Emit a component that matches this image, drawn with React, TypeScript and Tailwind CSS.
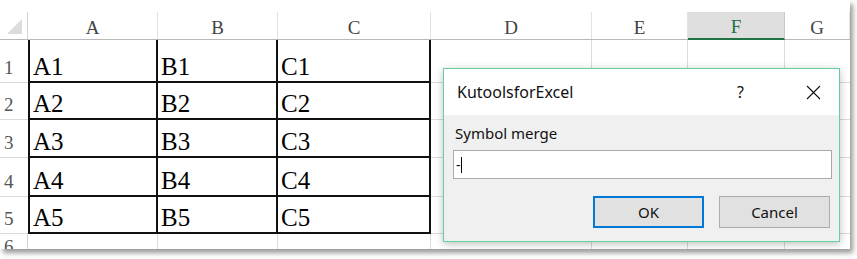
import React from "react";

const serif = "font-['Liberation_Serif',serif]";
const ui = "font-['Noto_Sans',sans-serif]";

const headerCols = [
  { label: "A", cls: "w-[130px]" },
  { label: "B", cls: "w-[120px]" },
  { label: "C", cls: "w-[153px]" },
  { label: "D", cls: "w-[161px]" },
  { label: "E", cls: "w-[96px]" },
  { label: "F", cls: "w-[97px]", active: true },
  { label: "G", cls: "flex-1" },
];

const rows = [
  { n: 1, h: "h-[43px]" },
  { n: 2, h: "h-[37px]" },
  { n: 3, h: "h-[38px]" },
  { n: 4, h: "h-[39px]" },
  { n: 5, h: "h-[37px]" },
];

function Corner() {
  return (
    <div className="w-[28px] h-full border-r border-[#d4d4d4] flex items-end justify-end pr-[5px] pb-[5px]">
      <svg width="15" height="15" viewBox="0 0 15 15">
        <polygon points="15,0 15,15 0,15" fill="#dcdcdc" />
      </svg>
    </div>
  );
}

function HeaderRow() {
  return (
    <div className="flex h-[28px] border-b border-[#b9b9b9]">
      <Corner />
      {headerCols.map((c) =>
        c.active ? (
          <div
            key={c.label}
            className={`${c.cls} h-[28px] bg-[#dfdfdf] border-b-2 border-[#217346] border-r border-r-[#c8c8c8] flex items-center justify-center pt-[3px] text-[19px] leading-none text-[#217346] ${serif}`}
          >
            {c.label}
          </div>
        ) : (
          <div
            key={c.label}
            className={`${c.cls} h-full border-r border-[#e2e2e2] flex items-center justify-center pt-[3px] text-[19px] leading-none text-[#444] ${serif}`}
          >
            {c.label}
          </div>
        )
      )}
    </div>
  );
}

function RangeCell({ cls, text }: { cls: string; text: string }) {
  return (
    <div className={`${cls} h-full flex items-end pl-[3px] pb-[2px] text-[25px] leading-none text-black ${serif}`}>
      {text}
    </div>
  );
}

function DataRow({ n, h }: { n: number; h: string }) {
  return (
    <div className={`flex ${h}`}>
      <div className={`w-[28px] h-full border-b border-[#dadada] flex items-end pl-[4px] pb-[5px] text-[19px] leading-none text-[#555] ${serif}`}>
        {n}
      </div>
      <RangeCell cls="w-[130px] border-l-2 border-r-2 border-b-2 border-[#111]" text={`A${n}`} />
      <RangeCell cls="w-[120px] border-r-2 border-b-2 border-[#111]" text={`B${n}`} />
      <RangeCell cls="w-[153px] border-r-2 border-b-2 border-[#111]" text={`C${n}`} />
      <div className="w-[161px] h-full border-r border-b border-[#dadada]" />
      <div className="w-[96px] h-full border-r border-b border-[#dadada]" />
      <div className="w-[97px] h-full border-r border-b border-[#dadada]" />
      <div className="flex-1 h-full border-b border-[#dadada]" />
    </div>
  );
}

function LastRow() {
  return (
    <div className="flex h-[20px]">
      <div className={`w-[28px] h-full border-r border-[#d4d4d4] pl-[4px] pt-[3px] text-[19px] leading-none text-[#555] ${serif}`}>6</div>
      <div className="w-[130px] h-full border-r border-[#dadada]" />
      <div className="w-[120px] h-full border-r border-[#dadada]" />
      <div className="w-[153px] h-full border-r border-[#dadada]" />
      <div className="w-[161px] h-full border-r border-[#dadada]" />
      <div className="w-[96px] h-full border-r border-[#dadada]" />
      <div className="w-[97px] h-full border-r border-[#dadada]" />
      <div className="flex-1 h-full" />
    </div>
  );
}

function CloseIcon() {
  return (
    <svg width="15" height="15" viewBox="0 0 15 15" fill="none" stroke="#111" strokeWidth="1.1">
      <line x1="1" y1="1" x2="14" y2="14" />
      <line x1="14" y1="1" x2="1" y2="14" />
    </svg>
  );
}

function Dialog() {
  return (
    <div className={`absolute left-[443px] top-[68px] w-[397px] h-[174px] border border-[#62cf9c] bg-[#f0f0f0] shadow-[0_2px_8px_rgba(0,0,0,0.25)] flex flex-col ${ui}`}>
      <div className="h-[46px] bg-white flex items-center pl-[13px] text-[16px] text-[#111]">
        <span>KutoolsforExcel</span>
        <span className="ml-auto mr-[62px] text-[16px]">?</span>
        <span className="mr-[18px]">
          <CloseIcon />
        </span>
      </div>
      <div className="flex flex-col pl-[9px] pr-[7px]">
        <div className="pl-[2px] pt-[8px] text-[15px] leading-[20px] text-[#111]">Symbol merge</div>
        <div className="mt-[7px] h-[29px] w-[379px] bg-white border border-[#a9a9a9] flex items-center pl-[2px]">
          <span className="text-[14px] leading-none text-[#111]">-</span>
          <span className="w-px h-[16px] bg-black" />
        </div>
        <div className="flex justify-end gap-[15px] mt-[17px] pr-[2px]">
          <button className="w-[111px] h-[32px] bg-[#e1e1e1] border-2 border-[#0078d7] text-[15px] text-[#111] flex items-center justify-center">
            OK
          </button>
          <button className="w-[111px] h-[32px] bg-[#e1e1e1] border border-[#adadad] text-[15px] text-[#111] flex items-center justify-center">
            Cancel
          </button>
        </div>
      </div>
    </div>
  );
}

export default function App() {
  return (
    <div className="w-[857px] h-[259px] bg-white overflow-hidden">
      <div className="relative w-[850px] h-[249px] bg-white overflow-hidden shadow-[3px_4px_5px_rgba(0,0,0,0.4)]">
        <div className="h-[12px]" />
        <HeaderRow />
        {rows.map((r) => (
          <DataRow key={r.n} n={r.n} h={r.h} />
        ))}
        <LastRow />
        <Dialog />
      </div>
    </div>
  );
}
